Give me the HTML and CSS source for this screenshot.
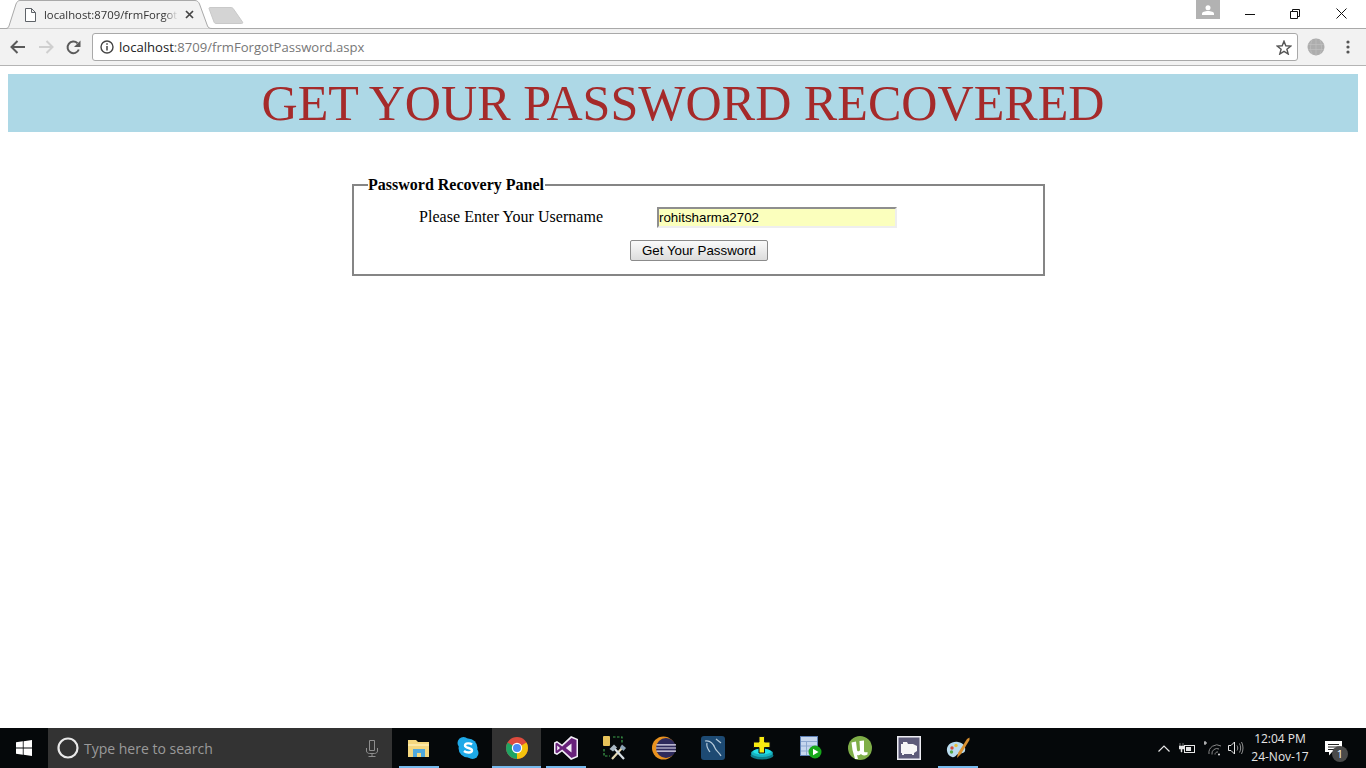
FILE: index.html
```html
<!DOCTYPE html>
<html lang="en">
<head>
    <meta charset="UTF-8">
    <meta name="viewport" content="width=device-width, initial-scale=1.0">
    <title>Password Recovery</title>
    <link rel="stylesheet" href="styles.css">
</head>
<body>
    <header class="chrome">
        <div class="tabstrip">
            <div class="tab">
                <svg class="tab-shape" width="212" height="29" viewBox="0 0 212 29">
                    <path d="M0 28.500H6C7.500 28.500 8.500 27.500 9 26L16 4C17 1.800 18 .5 20 .5H195C197 .5 198.500 1.800 199.500 4L207.500 26C208 27.500 209.500 28.500 212 28.500" fill="#f2f2f2" stroke="#a9a9a9"/>
                </svg>
                <svg class="tab-icon" width="11" height="14" viewBox="0 0 11 14">
                    <path d="M.5 .5H6.500L10.500 4.500V13.500H.5ZM6.500 .5V4.500H10.500" fill="#fff" stroke="#5f6368"/>
                </svg>
                <span class="tab-title">localhost:8709/frmForgot</span>
                <svg class="tab-close" width="9" height="9" viewBox="0 0 9 9">
                    <path d="M1 1L8 8M8 1L1 8" stroke="#444" stroke-width="1.700"/>
                </svg>
            </div>
            <svg class="newtab" width="36" height="18" viewBox="0 0 36 18">
                <path d="M1 1.500C1 .8 1.500 .5 2 .5H23C24 .5 25 1 25.500 2L34.500 15C35 16 34.500 16.500 33.500 16.500H8C7 16.500 6.500 16 6 15Z" fill="#d4d4d4" stroke="#c9c9c9"/>
            </svg>
            <div class="window-controls">
                <div class="avatar">
                    <svg width="12" height="10" viewBox="0 0 12 10">
                        <circle cx="6" cy="2.800" r="2.500" fill="#fff"/>
                        <path d="M0 10V8.500C0 7 3 6 6 6S12 7 12 8.500V10Z" fill="#fff"/>
                    </svg>
                </div>
                <div class="win-btn">
                    <svg width="10" height="10" viewBox="0 0 10 10"><path d="M0 5.500H10" stroke="#111"/></svg>
                </div>
                <div class="win-btn">
                    <svg width="10" height="10" viewBox="0 0 10 10"><path d="M.5 2.500H7.500V9.500H.5ZM2.500 2.500V.5H9.500V7.500H7.500" fill="none" stroke="#111"/></svg>
                </div>
                <div class="win-btn win-close">
                    <svg width="11" height="11" viewBox="0 0 11 11"><path d="M.5 .5L10.500 10.500M10.500 .5L.5 10.500" stroke="#111"/></svg>
                </div>
            </div>
        </div>
        <div class="toolbar">
            <svg class="tool-icon" width="16" height="14" viewBox="0 0 16 14">
                <path d="M15 7H2M7.500 1L1.500 7L7.500 13" fill="none" stroke="#5a5a5a" stroke-width="2"/>
            </svg>
            <svg class="tool-icon" width="16" height="14" viewBox="0 0 16 14">
                <path d="M1 7H14M8.500 1L14.500 7L8.500 13" fill="none" stroke="#cfcfcf" stroke-width="2"/>
            </svg>
            <svg class="tool-icon" width="15" height="15" viewBox="0 0 15 15">
                <path d="M12.800 9.500A5.800 5.800 0 1 1 11.500 3.300" fill="none" stroke="#5a5a5a" stroke-width="2"/>
                <path d="M14.500 .5V7H8Z" fill="#5a5a5a"/>
            </svg>
            <div class="omnibox">
                <svg width="14" height="14" viewBox="0 0 14 14">
                    <circle cx="7" cy="7" r="6" fill="none" stroke="#444" stroke-width="1.400"/>
                    <path d="M7 6V10.500M7 3.200V4.800" stroke="#444" stroke-width="1.500"/>
                </svg>
                <span class="url"><span class="url-host">localhost</span>:8709/frmForgotPassword.aspx</span>
                <svg class="star" width="16" height="15" viewBox="0 0 16 15">
                    <path d="M8 1.200L9.800 5.800L14.800 6.100L10.900 9.200L12.200 14L8 11.300L3.800 14L5.100 9.200L1.200 6.100L6.200 5.800Z" fill="none" stroke="#555" stroke-width="1.400"/>
                </svg>
            </div>
            <svg class="globe" width="18" height="18" viewBox="0 0 18 18">
                <circle cx="9" cy="9" r="8.500" fill="#adadad"/>
                <path d="M1 6.500H17M1 11.500H17M9 .5V17.500M5 2C3 7 3 12 5 16M13 2C15 7 15 12 13 16" fill="none" stroke="#c0c0c0" stroke-width=".7"/>
            </svg>
            <svg class="menu-dots" width="4" height="14" viewBox="0 0 4 14">
                <circle cx="2" cy="2" r="1.600" fill="#555"/>
                <circle cx="2" cy="7" r="1.600" fill="#555"/>
                <circle cx="2" cy="12" r="1.600" fill="#555"/>
            </svg>
        </div>
    </header>

    <main class="page">
        <h1 class="banner">GET YOUR PASSWORD RECOVERED</h1>
        <fieldset class="panel">
            <legend>Password Recovery Panel</legend>
            <div class="panel-row">
                <label for="username">Please Enter Your Username</label>
                <input type="text" id="username" value="rohitsharma2702">
            </div>
            <button type="button">Get Your Password</button>
        </fieldset>
    </main>

    <footer class="taskbar">
        <div class="start">
            <svg width="16" height="16" viewBox="0 0 16 16">
                <path d="M0 2.300L6.800 1.300V7.600H0ZM7.600 1.200L16 0V7.600H7.600ZM0 8.400H6.800V14.700L0 13.700ZM7.600 8.400H16V16L7.600 14.800Z" fill="#fff"/>
            </svg>
        </div>
        <div class="search">
            <svg width="22" height="22" viewBox="0 0 22 22">
                <circle cx="11" cy="11" r="9.500" fill="none" stroke="#e8e8e8" stroke-width="2.200"/>
            </svg>
            <span class="search-text">Type here to search</span>
            <svg class="mic" width="12" height="17" viewBox="0 0 12 17">
                <path d="M3.500 .5H8.500V10.500H3.500ZM.5 8V11C.5 12.500 2 13.500 3.500 13.500H8.500C10 13.500 11.500 12.500 11.500 11V8M6 13.500V16.500M2.500 16.500H9.500" fill="none" stroke="#8e8e8e"/>
            </svg>
        </div>
        <div class="apps">
            <div class="app running">
                <svg width="22" height="20" viewBox="0 0 22 20">
                    <path d="M0 2H8L10 4H21V19H0Z" fill="#f4d77e"/>
                    <path d="M0 6H21V8H0Z" fill="#fbe8a6"/>
                    <path d="M5 11H17V19H13V15H9V19H5Z" fill="#4fa8dc"/>
                </svg>
            </div>
            <div class="app">
                <svg width="22" height="24" viewBox="0 0 22 24">
                    <circle cx="6.500" cy="7" r="6" fill="#1ea9e8"/>
                    <circle cx="15.500" cy="17" r="6" fill="#1ea9e8"/>
                    <circle cx="11" cy="12" r="9.500" fill="#1ea9e8"/>
                    <path d="M15 8.500C13 6.800 8 7 8 9.500C8 12.500 15 11.500 15 14.500C15 17 9.500 17.200 7 15" fill="none" stroke="#fff" stroke-width="2.400"/>
                </svg>
            </div>
            <div class="app running active">
                <svg width="22" height="22" viewBox="0 0 22 22">
                    <circle cx="11" cy="11" r="11" fill="#dd4b3e"/>
                    <path d="M11 11L20.500 5.500A11 11 0 0 1 11 22Z" fill="#f4c20d"/>
                    <path d="M11 11L11 22A11 11 0 0 1 1.500 5.500Z" fill="#1fa463"/>
                    <circle cx="11" cy="11" r="5.200" fill="#fff"/>
                    <circle cx="11" cy="11" r="4" fill="#4a8bf5"/>
                </svg>
            </div>
            <div class="app running">
                <svg width="24" height="24" viewBox="0 0 24 24">
                    <path d="M17 0L24 3V21L17 24L8 15.500L3 19L0 17.500V6.500L3 5L8 8.500Z" fill="#f2eef6"/>
                    <path d="M17.500 2L22.500 4V20L17.500 22L8.200 13.500L3 17.200L1.500 16.500V7.500L3 6.800L8.200 10.500Z" fill="#68217a"/>
                    <path d="M17.500 7.500L11.800 12L17.500 16.500ZM3.200 9.500L6 12L3.200 14.500Z" fill="#f2eef6"/>
                </svg>
            </div>
            <div class="app">
                <svg width="24" height="24" viewBox="0 0 24 24">
                    <rect x="0" y="0" width="7" height="10" rx="1" fill="#e8c35a"/>
                    <path d="M10 1H19V8M1 13V20H7" fill="none" stroke="#3fa34d" stroke-width="1.200" stroke-dasharray="2.500 1.500"/>
                    <path d="M9 23L20 11" stroke="#e4d6b0" stroke-width="2.200"/>
                    <path d="M10 11L21 23" stroke="#d8dfe6" stroke-width="2.200"/>
                    <path d="M6.500 13L11 8.500L14 11.500L10 15.500Z" fill="#aab8c4"/>
                    <path d="M19 8.500L23 12L20.500 15L17 11.500Z" fill="#8fa6b8"/>
                </svg>
            </div>
            <div class="app">
                <svg width="24" height="24" viewBox="0 0 24 24">
                    <circle cx="11.500" cy="12" r="11.500" fill="#e8911f"/>
                    <circle cx="14" cy="12" r="10" fill="#2e2a5c"/>
                    <path d="M4.500 8.800H24M4 12H24M4.500 15.200H24" stroke="#e8e4f4" stroke-width="1.200"/>
                </svg>
            </div>
            <div class="app">
                <svg width="24" height="24" viewBox="0 0 24 24">
                    <rect width="24" height="24" rx="3" fill="#1d4a73"/>
                    <path d="M4 5C9 4 12 7 14 12C15 15 18 16 20 20M6 7C5 11 7 13 9 16M15 3L20 7" fill="none" stroke="#b6cbdb" stroke-width="1.200"/>
                </svg>
            </div>
            <div class="app">
                <svg width="24" height="24" viewBox="0 0 24 24">
                    <ellipse cx="12" cy="19.500" rx="11.500" ry="4" fill="#0d7f8c"/>
                    <ellipse cx="12" cy="17" rx="11" ry="4" fill="#17b4c2"/>
                    <ellipse cx="12" cy="15.500" rx="9" ry="3" fill="#25e0e6"/>
                    <path d="M9 .5H14.500V6H20V11.500H14.500V17H9V11.500H3.500V6H9Z" fill="#f7ea10" stroke="#111"/>
                </svg>
            </div>
            <div class="app">
                <svg width="22" height="24" viewBox="0 0 22 24">
                    <rect x=".5" y=".5" width="17" height="19" fill="#c6d6ee" stroke="#5d7fb5"/>
                    <path d="M1 5.500H17M1 10H17M1 15H17M6.500 5.500V19" stroke="#8ea8d0"/>
                    <circle cx="15" cy="16" r="6.500" fill="#17a81b"/>
                    <path d="M13 12.800L18.500 16L13 19.200Z" fill="#fff"/>
                </svg>
            </div>
            <div class="app">
                <svg width="24" height="24" viewBox="0 0 24 24">
                    <circle cx="12" cy="12" r="12" fill="#7fae48"/>
                    <path d="M3.500 6.500L8 5.500L9 14C9.300 16 11.500 15.500 12 14L11.500 5L16 4.500V15C16 16.500 17.500 16.500 19.500 16V18.500C16.500 20 14 19.500 13 18C11.500 19.500 9.800 19.500 9 19L10 23H7L4.500 14Z" fill="#fff"/>
                </svg>
            </div>
            <div class="app">
                <svg width="24" height="24" viewBox="0 0 24 24">
                    <rect x=".75" y=".75" width="22.500" height="22.500" fill="#5c5a78" stroke="#ececf2" stroke-width="1.500"/>
                    <path d="M4 8H6V6H10L11 8H16L20 10V15L17 17V19H15V18H7V19H5V17H4Z" fill="#f6f6f6"/>
                </svg>
            </div>
            <div class="app running">
                <svg width="24" height="24" viewBox="0 0 24 24">
                    <path d="M1 15C0 9 6 5 12 6C18 7 20 11 19 15C18 18 14 17 12 18C10 19 9 22 6 21C3 20 1.500 18 1 15Z" fill="#b9dcef"/>
                    <circle cx="6" cy="12" r="1.700" fill="#d84a3a"/>
                    <circle cx="10" cy="9.500" r="1.700" fill="#e8c040"/>
                    <circle cx="5.500" cy="16" r="1.700" fill="#55a84a"/>
                    <path d="M21 3L23.500 1.500V4L15 18L11 22L12 17Z" fill="#d99030"/>
                </svg>
            </div>
        </div>
        <div class="tray">
            <svg class="chevron" width="12" height="7" viewBox="0 0 12 7">
                <path d="M.5 6.500L6 1L11.500 6.500" fill="none" stroke="#e6e6e6" stroke-width="1.200"/>
            </svg>
            <svg class="battery" width="16" height="11" viewBox="0 0 16 11">
                <rect x="5.500" y="2.500" width="10" height="7" fill="none" stroke="#e6e6e6"/>
                <rect x="7" y="4" width="5" height="4" fill="#e6e6e6"/>
                <path d="M1 0V3M4 0V3M0 3H5V6H3V9H2V6H0Z" fill="#e6e6e6" stroke="#e6e6e6" stroke-width=".5"/>
            </svg>
            <svg class="wifi" width="20" height="15" viewBox="0 0 20 15">
                <path d="M1 0V4M-1 2H3" stroke="#e6e6e6"/>
                <path d="M5 13A8 8 0 0 1 17 5M8 13.500A5 5 0 0 1 15 8M11 13.500A2.500 2.500 0 0 1 14 11" fill="none" stroke="#8a8a8a"/>
                <circle cx="15" cy="13.500" r="1" fill="#e6e6e6"/>
            </svg>
            <svg class="speaker" width="16" height="14" viewBox="0 0 16 14">
                <path d="M.5 4.500H3L6.500 1V13L3 9.500H.5Z" fill="none" stroke="#e6e6e6"/>
                <path d="M9 4.500C10 6 10 8 9 9.500M11.500 2.500C13 5 13 9 11.500 11.500M13.500 1C15.500 4.500 15.500 9.500 13.500 13" fill="none" stroke="#b5b5b5" stroke-width=".8"/>
            </svg>
            <div class="clock">
                <span>12:04 PM</span>
                <span>24-Nov-17</span>
            </div>
            <div class="notify">
                <svg width="17" height="15" viewBox="0 0 17 15">
                    <path d="M0 0H17V11H7L4 14.500V11H0Z" fill="#fff"/>
                    <path d="M3 3.500H14M3 6H14M3 8.500H10" stroke="#222"/>
                </svg>
                <span class="notify-count">1</span>
            </div>
        </div>
    </footer>
</body>
</html>
```

FILE: styles.css
```css
html, body {
    height: 100%;
}

body {
    margin: 0;
    display: flex;
    flex-direction: column;
    height: 768px;
    overflow: hidden;
    background-color: #fff;
    font-family: "Liberation Serif", serif;
}

svg {
    display: block;
    flex: none;
}

/* browser frame */
.chrome {
    flex: none;
    font-family: "Open Sans", sans-serif;
}

.tabstrip {
    display: flex;
    align-items: flex-start;
    height: 28px;
    background-color: #fff;
}

.tab {
    position: relative;
    display: flex;
    align-items: center;
    flex: none;
    width: 212px;
    height: 29px;
    z-index: 1;
}

.tab-shape {
    position: absolute;
    left: 0;
    top: 0;
}

.tab-icon, .tab-title, .tab-close {
    position: relative;
}

.tab-icon {
    margin-left: 25px;
}

.tab-title {
    width: 134px;
    margin-left: 8px;
    white-space: nowrap;
    font-size: 11.300px;
    color: #333;
    -webkit-mask-image: linear-gradient(to right, #000 120px, transparent 134px);
    mask-image: linear-gradient(to right, #000 120px, transparent 134px);
}

.tab-close {
    margin-left: 7px;
}

.newtab {
    margin: 7px 0 0 -4px;
}

.window-controls {
    display: flex;
    align-items: flex-start;
    margin-left: auto;
}

.avatar {
    display: flex;
    justify-content: center;
    align-items: center;
    width: 24px;
    height: 19px;
    margin-right: 7px;
    background-color: #b2b2b2;
}

.win-btn {
    display: flex;
    justify-content: center;
    align-items: center;
    width: 45px;
    height: 27px;
}

.win-close {
    width: 49px;
}

.toolbar {
    display: flex;
    align-items: center;
    height: 38px;
    box-sizing: border-box;
    padding-left: 10px;
    background-color: #f2f2f2;
    border-top: 1px solid #a9a9a9;
    border-bottom: 1px solid #b4b4b4;
}

.tool-icon {
    margin-right: 12px;
}

.omnibox {
    display: flex;
    align-items: center;
    flex: none;
    width: 1206px;
    height: 28px;
    margin-left: -1px;
    padding: 0 5px 0 7px;
    box-sizing: border-box;
    background-color: #fff;
    border: 1px solid #a9a9a9;
    border-radius: 3px;
}

.url {
    margin-left: 5px;
    font-size: 13.100px;
    color: #777;
    white-space: nowrap;
}

.url-host {
    color: #222;
}

.star {
    margin-left: auto;
}

.globe {
    margin-left: 9px;
}

.menu-dots {
    margin-left: 21px;
}

/* page content */
.page {
    flex: 1;
    padding: 8px;
}

.banner {
    margin: 0;
    height: 58px;
    background-color: lightblue;
    color: brown;
    font-size: 50.100px;
    font-weight: normal;
    line-height: 58px;
    text-align: center;
}

.panel {
    width: 693px;
    height: 100px;
    box-sizing: border-box;
    margin: 44px 0 0 344px;
    padding: 0 14px;
    border: 2px solid #858585;
    font-size: 16px;
}

.panel legend {
    padding: 0 1px 0 0;
    font-weight: bold;
    line-height: 18px;
}

.panel-row {
    display: flex;
    align-items: center;
    height: 21px;
    margin: 13px 0 0 51px;
}

.panel-row label {
    width: 238px;
    padding-bottom: 2px;
    letter-spacing: .04px;
}

.panel-row input {
    width: 240px;
    height: 21px;
    box-sizing: border-box;
    padding: 0;
    border: 2px solid #eee;
    border-top-color: #8e8e8e;
    border-left-color: #8e8e8e;
    background-color: #fbffbd;
    font-family: "Liberation Sans", sans-serif;
    font-size: 13.333px;
    color: #000;
}

.panel button {
    display: block;
    width: 138px;
    height: 21px;
    margin: 12px 0 0 262px;
    padding: 0;
    border: 1px solid #8b8b8b;
    border-radius: 2px;
    background: linear-gradient(#fafafa, #dcdcdc);
    font-family: "Liberation Sans", sans-serif;
    font-size: 13.333px;
    color: #000;
}

/* windows taskbar */
.taskbar {
    flex: none;
    display: flex;
    height: 40px;
    background-color: #05080a;
    font-family: "Open Sans", sans-serif;
}

.start {
    display: flex;
    justify-content: center;
    align-items: center;
    width: 48px;
}

.search {
    display: flex;
    align-items: center;
    width: 344px;
    box-sizing: border-box;
    padding: 0 14px 0 9px;
    background-color: #333;
}

.search-text {
    margin-left: 5px;
    font-size: 14px;
    color: #9a9a9a;
}

.mic {
    margin-left: auto;
}

.apps {
    display: flex;
    margin-left: 2px;
}

.app {
    display: flex;
    justify-content: center;
    align-items: center;
    position: relative;
    width: 49px;
}

.app.active {
    background-color: #333;
}

.app.running::after {
    content: "";
    position: absolute;
    left: 5px;
    right: 4px;
    bottom: 0;
    height: 2px;
    background-color: #76b9ed;
}

.app.active::after {
    left: 0;
    right: 0;
}

.tray {
    display: flex;
    align-items: center;
    margin-left: auto;
    color: #e6e6e6;
}

.chevron {
    margin-right: 9px;
}

.battery {
    margin-right: 9px;
}

.wifi {
    margin-right: 4px;
}

.clock {
    display: flex;
    flex-direction: column;
    align-items: center;
    width: 60px;
    margin: 0 15px 0 6px;
    font-size: 12px;
    line-height: 18px;
}

.notify {
    position: relative;
    width: 33px;
    height: 30px;
    margin-right: 8px;
    padding-top: 8px;
    box-sizing: border-box;
}

.notify-count {
    position: absolute;
    left: 7px;
    top: 13px;
    width: 16px;
    height: 16px;
    border-radius: 50%;
    background-color: #4a4a4a;
    color: #fff;
    font-size: 11px;
    line-height: 16px;
    text-align: center;
}
```
